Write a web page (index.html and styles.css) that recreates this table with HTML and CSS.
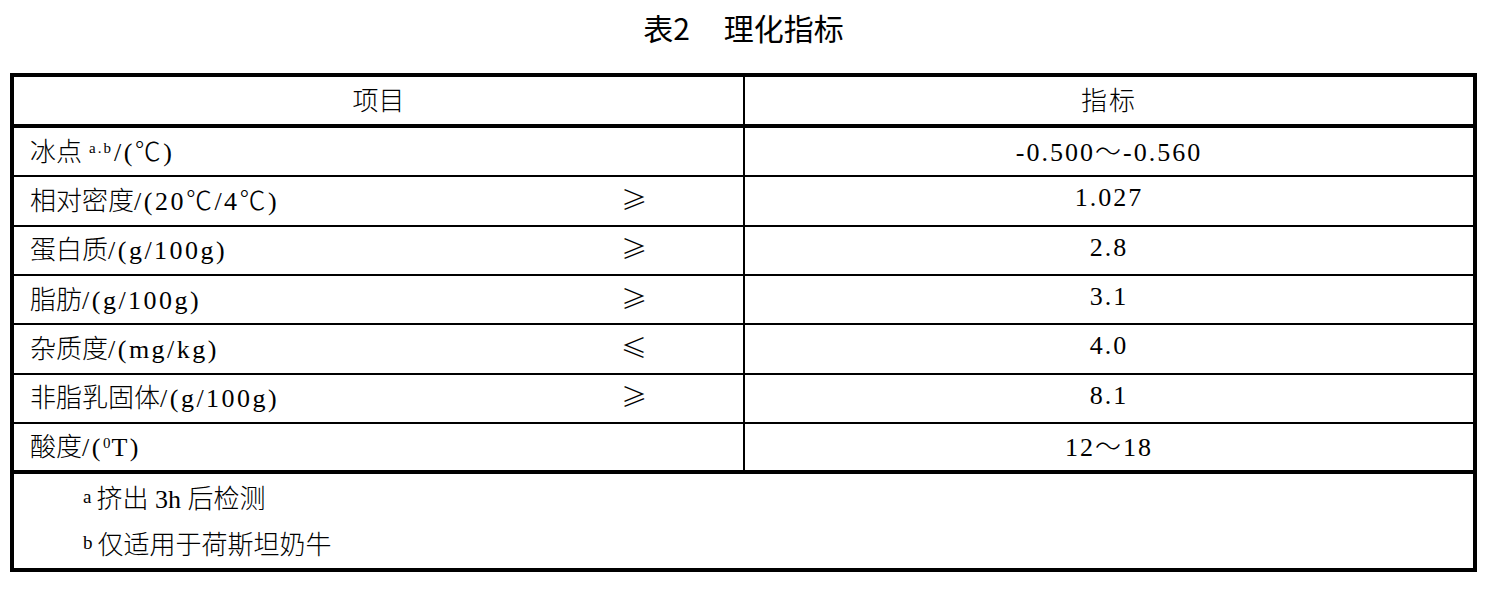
FILE: index.html
```html
<!DOCTYPE html>
<html lang="zh-CN">
<head>
<meta charset="utf-8">
<title>表2 理化指标</title>
<link rel="stylesheet" href="styles.css">
</head>
<body>
<h1 class="title"><span>表2</span><span class="title-name">理化指标</span></h1>
<div class="table">
  <div class="row head">
    <div class="cell item center">项目</div>
    <div class="cell value">指标</div>
  </div>
  <div class="row">
    <div class="cell item"><span class="name">冰点<sup class="sup">a.b</sup><span class="unit">/(℃)</span></span></div>
    <div class="cell value">-0.500～-0.560</div>
  </div>
  <div class="row">
    <div class="cell item"><span class="name">相对密度<span class="unit">/(20℃/4℃)</span></span><span class="sign">≥</span></div>
    <div class="cell value">1.027</div>
  </div>
  <div class="row">
    <div class="cell item"><span class="name">蛋白质<span class="unit">/(g/100g)</span></span><span class="sign">≥</span></div>
    <div class="cell value">2.8</div>
  </div>
  <div class="row">
    <div class="cell item"><span class="name">脂肪<span class="unit">/(g/100g)</span></span><span class="sign">≥</span></div>
    <div class="cell value">3.1</div>
  </div>
  <div class="row">
    <div class="cell item"><span class="name">杂质度<span class="unit">/(mg/kg)</span></span><span class="sign">≤</span></div>
    <div class="cell value">4.0</div>
  </div>
  <div class="row">
    <div class="cell item"><span class="name">非脂乳固体<span class="unit">/(g/100g)</span></span><span class="sign">≥</span></div>
    <div class="cell value">8.1</div>
  </div>
  <div class="row last">
    <div class="cell item"><span class="name">酸度<span class="unit">/(<sup class="deg">0</sup>T)</span></span></div>
    <div class="cell value">12～18</div>
  </div>
  <div class="notes">
    <p class="note"><sup class="mark">a</sup>挤出 3h 后检测</p>
    <p class="note"><sup class="mark">b</sup>仅适用于荷斯坦奶牛</p>
  </div>
</div>
</body>
</html>
```
FILE: styles.css
```css
html, body {
  margin: 0;
  padding: 0;
  background: #ffffff;
}

body {
  color: #000000;
  font-family: "Liberation Serif", "Noto Sans CJK SC", serif;
  font-size: 26px;
  font-weight: 300;
  width: 1496px;
}

.title {
  margin: 0 0 31px 10px;
  width: 1467px;
  padding-top: 12px;
  height: 30px;
  line-height: 30px;
  display: flex;
  justify-content: center;
  font-family: "Noto Sans CJK SC", sans-serif;
  font-size: 30px;
  font-weight: 400;
}

.title-name {
  margin-left: 34px;
}

.table {
  margin-left: 10px;
  width: 1459px;
  border: 4px solid #000000;
}

.row {
  display: flex;
  box-sizing: border-box;
  height: 49.33px;
  border-bottom: 2px solid #000000;
}

.row.head {
  height: 51px;
  border-bottom: 4px solid #000000;
}

.row.last {
  height: 50px;
  border-bottom: 4px solid #000000;
}

.cell {
  display: flex;
  align-items: center;
  height: 100%;
  box-sizing: border-box;
  padding-bottom: 5px;
  white-space: nowrap;
}

.item {
  width: 731px;
  border-right: 2px solid #000000;
  padding-left: 16px;
  padding-right: 96px;
  justify-content: space-between;
}

.item.center {
  justify-content: center;
  padding-left: 0;
  padding-right: 0;
}

.value {
  width: 728px;
  justify-content: center;
  letter-spacing: 2px;
}

.unit {
  letter-spacing: 2.5px;
}

.sign {
  width: 26px;
  text-align: center;
  font-family: "Noto Sans CJK SC", sans-serif;
  font-weight: 300;
}

.sup {
  font-size: 15px;
  letter-spacing: 2px;
  vertical-align: 8px;
  line-height: 0;
  margin-left: 7px;
  margin-right: 1px;
}

.deg {
  font-size: 15px;
  letter-spacing: 1px;
  vertical-align: 8px;
  line-height: 0;
}

.notes {
  height: 94px;
  box-sizing: border-box;
  padding-top: 3px;
  padding-left: 69px;
}

.note {
  margin: 0;
  height: 46px;
  line-height: 46px;
  white-space: nowrap;
}

.mark {
  font-size: 19px;
  vertical-align: 5px;
  line-height: 0;
  margin-right: 5px;
}
```
